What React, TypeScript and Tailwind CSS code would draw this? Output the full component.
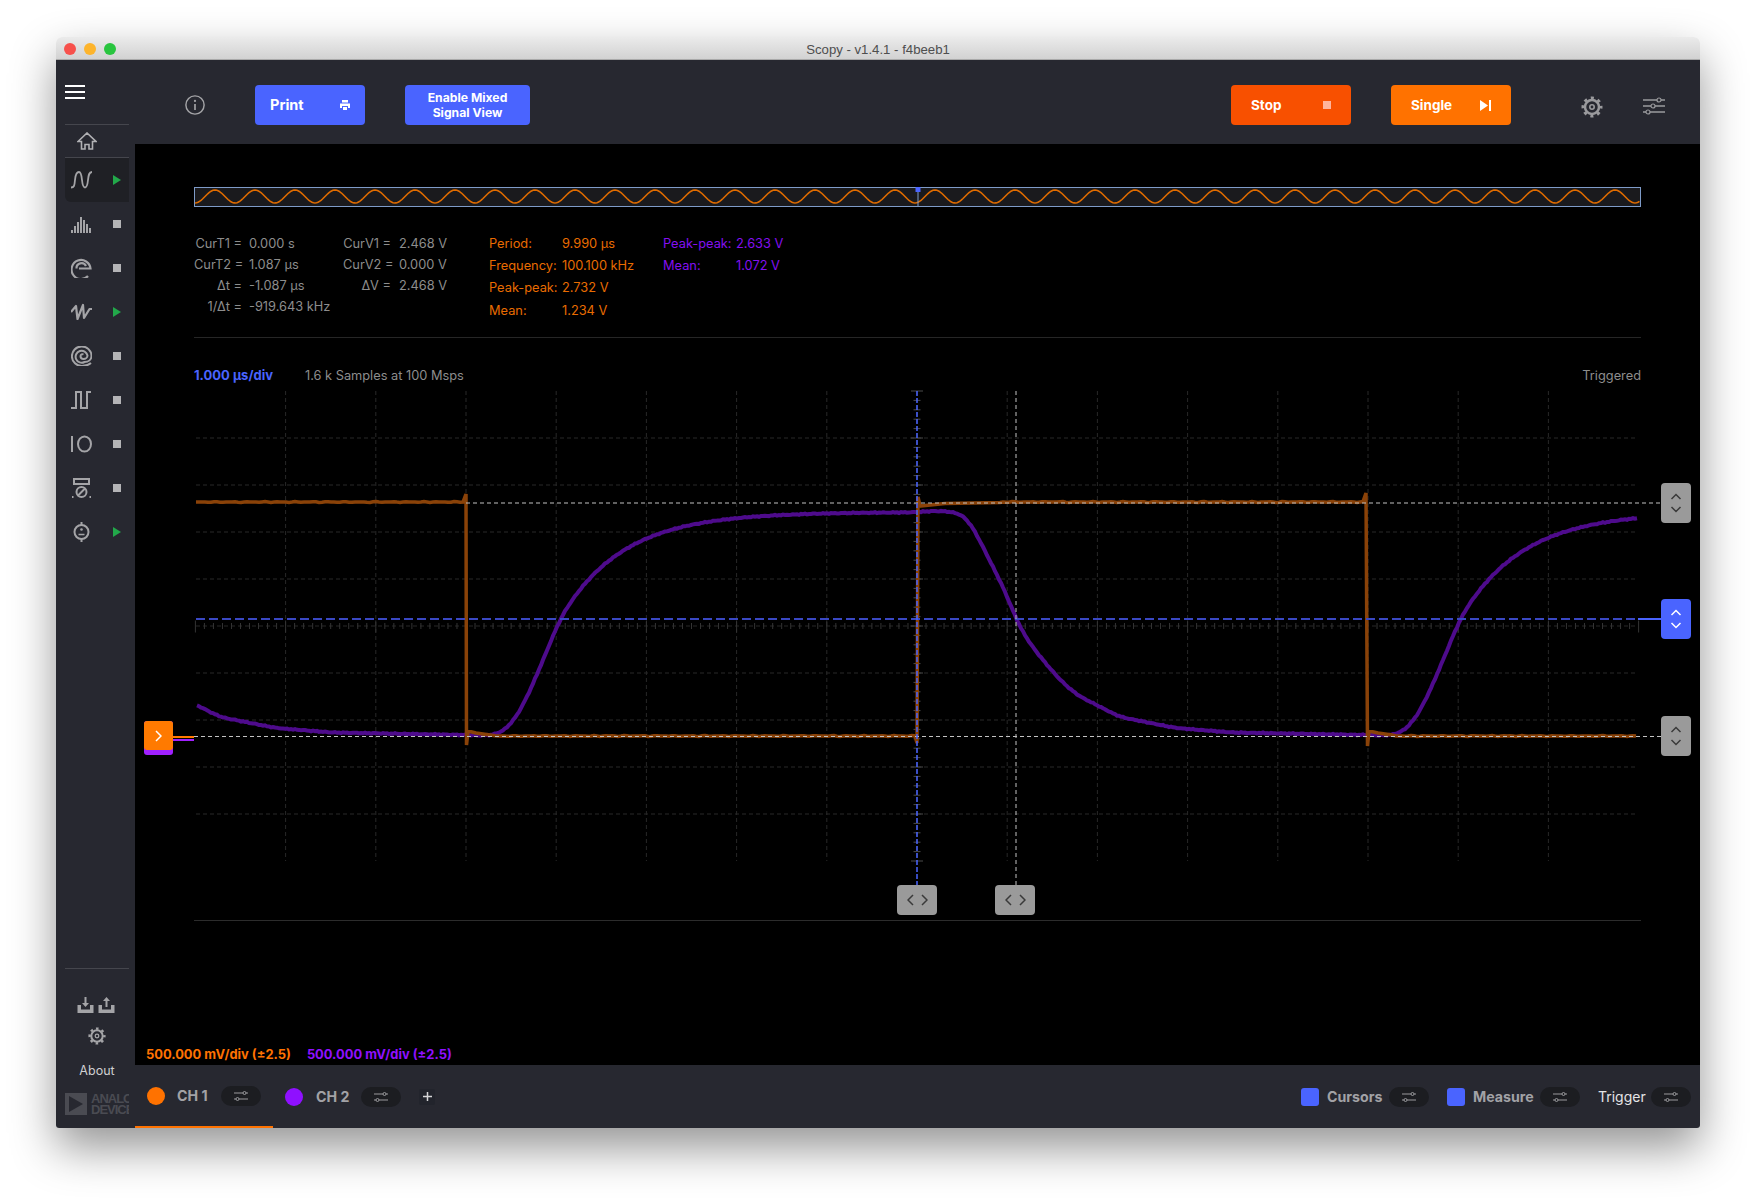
import type { ReactNode } from "react"

// trace helpers, all coordinates are page pixels (the plot svg viewBox matches them)
const lerpTable = (t: number[][], d: number) => {
  for (let i = 1; i < t.length; i++) {
    if (d <= t[i][0]) {
      const [x0, y0] = t[i - 1]
      const [x1, y1] = t[i]
      return y0 + ((y1 - y0) * (d - x0)) / (x1 - x0)
    }
  }
  return t[t.length - 1][1]
}

const fallTable = [
  [0, 512], [23, 510.7], [40, 512.7], [50, 518], [60, 535], [70, 555], [80, 575], [90, 595], [98, 617],
  [106, 633], [120, 653], [143, 680], [160, 695], [203, 717], [259, 728], [315, 732.5], [449, 735],
]
const riseHead = [
  [0, 735], [20, 735.5], [32, 734], [45, 725], [60, 700], [75, 665], [94, 619],
]

const noise = (x: number) => Math.sin(x * 1.7) * 0.3 + Math.sin(x * 0.63 + 1) * 0.25

// after the steep part the rise settles exponentially
const riseY = (d: number) => (d < 94 ? lerpTable(riseHead, d) : 512 + 107 * Math.exp(-(d - 94) / 62))

const purpleY = (x: number) => {
  if (x < 466) return lerpTable(fallTable, x - 17)
  if (x < 917) return riseY(x - 466)
  if (x < 1366) return lerpTable(fallTable, x - 917)
  return riseY(x - 1366)
}

const purplePath = () => {
  const pts: string[] = []
  for (let x = 197; x <= 1638; x += 2) {
    let sum = 0
    for (let k = -8; k <= 8; k += 2) sum += purpleY(x + k)
    pts.push(`${x},${(sum / 9 + noise(x)).toFixed(1)}`)
  }
  return "M" + pts.join(" L")
}

const orangePath = () => {
  const pts: string[] = []
  const flat = (a: number, b: number, y: number) => {
    for (let x = a; x < b; x += 3) pts.push(`${x},${(y + noise(x) * 0.8).toFixed(1)}`)
  }
  flat(196, 465, 502)
  pts.push("466,494", "466.5,745", "468,731", "476,733", "490,735")
  flat(495, 916, 736)
  pts.push("917,743", "918,497", "920,506", "945,503.5", "1000,502.5")
  flat(1003, 1365, 502)
  pts.push("1366,493", "1367.5,746", "1369,731", "1378,733", "1392,735")
  flat(1396, 1638, 736)
  return "M" + pts.join(" L")
}

const sinePath = () => {
  const pts: string[] = []
  for (let x = 195; x <= 1640; x += 1.5) {
    pts.push(`${x},${(196.5 - 6.5 * Math.sin((2 * Math.PI * (x - 205)) / 40)).toFixed(1)}`)
  }
  return "M" + pts.join(" L")
}

const gridX = Array.from({ length: 15 }, (_, i) => 285.6 + i * 90.2)
const gridY = Array.from({ length: 9 }, (_, i) => 438 + i * 47)
const ticksX = Array.from({ length: 161 }, (_, i) => 195.4 + i * 9.02)
const ticksY = Array.from({ length: 51 }, (_, i) => 391 + i * 9.4)

function Plot() {
  return (
    <svg viewBox="135 385 1565 535" className="block w-[1565px] h-[535px]">
      {gridX.map((x) => (
        <line key={x} x1={x} x2={x} y1={391} y2={861} stroke="#282828" strokeDasharray="4 3" />
      ))}
      {gridY.map((y) => (
        <line key={y} x1={196} x2={1638} y1={y} y2={y} stroke="#282828" strokeDasharray="4 3" />
      ))}
      {ticksX.map((x, i) => (
        <line key={x} x1={x} x2={x} y1={i % 10 === 0 ? 620.5 : 623} y2={i % 10 === 0 ? 632.5 : 629} stroke="#343434" />
      ))}
      {ticksY.map((y, i) => (
        <line key={y} x1={i % 5 === 0 ? 911 : 913.5} x2={i % 5 === 0 ? 923 : 920.5} y1={y} y2={y} stroke="#4a4a4a" />
      ))}
      <path d={purplePath()} fill="none" stroke="#4e0b8c" strokeWidth="4" />
      <path d={orangePath()} fill="none" stroke="#8a4208" strokeWidth="3.500" />
      <line x1={196} x2={1638} y1={619} y2={619} stroke="#3a48c4" strokeWidth="2" strokeDasharray="9 4" />
      <line x1={1638} x2={1661} y1={619} y2={619} stroke="#4a64ff" strokeWidth="2" />
      <line x1={466} x2={1661} y1={503} y2={503} stroke="#c2c2c2" strokeDasharray="4 3" />
      <line x1={194} x2={1661} y1={736.5} y2={736.5} stroke="#c2c2c2" strokeDasharray="4 3" />
      <line x1={917} x2={917} y1={391} y2={885} stroke="#4a64ff" strokeWidth="1.500" strokeDasharray="5 2" />
      <line x1={1016} x2={1016} y1={391} y2={885} stroke="#c2c2c2" strokeDasharray="4 3" />
    </svg>
  )
}

// sidebar icons
const S = { fill: "none", stroke: "#a4a4a7", strokeWidth: 1.6 }

const icons: Record<string, ReactNode> = {
  scope: <path {...S} strokeWidth="1.800" d="M0 17.500c3 0 3.500-1.500 4-7.500s1.500-8 4-8c2 0 2.500 3 3 8s1 7.500 3 7.500 2.500-2.500 3-7.500 1-8 4-8" />,
  spectrum: (
    <g fill="#a4a4a7">
      <rect x="0" y="16" width="2" height="3" />
      <rect x="3" y="12" width="2" height="7" />
      <rect x="6" y="8" width="2" height="11" />
      <rect x="9" y="3" width="2" height="16" />
      <rect x="12" y="6" width="2" height="13" />
      <rect x="15" y="10" width="2" height="9" />
      <rect x="18" y="14" width="2" height="5" />
    </g>
  ),
  network: (
    <g {...S} strokeWidth="2.200">
      <path d="M17 18A9.500 9.500 0 1 1 19.500 10.500H8" />
      <path d="M5.500 10.500A5 5 0 0 1 15 8" />
    </g>
  ),
  siggen: <path {...S} strokeWidth="2.200" strokeLinejoin="round" d="M0 10l5-6 1.500 13L12 3l1 13 5.500-9H21" />,
  spiral: (
    <g {...S} strokeWidth="2">
      <path d="M20 17c-3 2.500-6 3-9 3A9.800 9.800 0 1 1 20.500 10c0 3.500-3 6-7 6A6 6 0 1 1 16.500 9.500c0 2-2 3.500-4 3.500a3 3 0 0 1-3-3 2 2 0 0 1 3-1.500" />
    </g>
  ),
  pulse: <path {...S} strokeWidth="2" d="M0 18h5V2h5v16h6V2h4" />,
  io: (
    <g {...S} strokeWidth="2">
      <path d="M1 2v16" />
      <ellipse cx="13.500" cy="10" rx="6.500" ry="7.500" />
    </g>
  ),
  power: (
    <g {...S} strokeWidth="2">
      <rect x="3" y="1" width="15" height="5" />
      <circle cx="10.500" cy="14" r="5" />
      <path d="M7 17.500l7-7" />
      <path d="M1 19h1.500M18.500 19H20" />
    </g>
  ),
  dmm: (
    <g {...S} strokeWidth="2">
      <circle cx="10.500" cy="10" r="7" />
      <path d="M10.500 0v3M10.500 17v3" />
      <circle cx="10.500" cy="7.500" r="1.300" fill="#a4a4a7" stroke="none" />
      <path d="M7.500 12.500h6" strokeWidth="1.500" />
    </g>
  ),
}

const tools = [
  { id: "scope", on: true },
  { id: "spectrum", on: false },
  { id: "network", on: false },
  { id: "siggen", on: true },
  { id: "spiral", on: false },
  { id: "pulse", on: false },
  { id: "io", on: false },
  { id: "power", on: false },
  { id: "dmm", on: true },
]

function Gear({ size = 22, color = "#9a9a9d" }: { size?: number; color?: string }) {
  return (
    <svg width={size} height={size} viewBox="0 0 22 22" fill="none" stroke={color}>
      <circle cx="11" cy="11" r="7" strokeWidth="2.500" />
      <circle cx="11" cy="11" r="9" strokeWidth="3" strokeDasharray="3.070 4" strokeDashoffset="1.500" />
      <circle cx="11" cy="11" r="2.200" strokeWidth="1.600" />
    </svg>
  )
}

function Sliders({ w, color = "#9a9a9d" }: { w: number; color?: string }) {
  return (
    <svg width={w} height={w * 0.82} viewBox="0 0 22 18" fill="none" stroke={color} strokeWidth="1.500">
      <path d="M0 3h14M18 3h4M0 9h8M12 9h10M0 15h3M7 15h15" />
      <circle cx="16" cy="3" r="2" strokeWidth="1.200" />
      <circle cx="10" cy="9" r="2" strokeWidth="1.200" />
      <circle cx="5" cy="15" r="2" strokeWidth="1.200" />
    </svg>
  )
}

function Pill() {
  return (
    <div className="w-[40px] h-[20px] rounded-full bg-[#1c1d21] flex items-center justify-center">
      <svg width="14" height="12" viewBox="0 0 14 12" fill="none" stroke="#9a9a9d">
        <path d="M0 3h9M12 3h2M0 9h2M5 9h9" />
        <circle cx="10.500" cy="3" r="1.500" />
        <circle cx="3.500" cy="9" r="1.500" />
      </svg>
    </div>
  )
}

function Chevrons({ dir, color = "#3a3a3a" }: { dir: "v" | "h"; color?: string }) {
  return dir === "v" ? (
    <svg width="12" height="20" viewBox="0 0 12 20" fill="none" stroke={color} strokeWidth="1.500">
      <path d="M1.500 6L6 1.500 10.500 6M1.500 14L6 18.500 10.500 14" />
    </svg>
  ) : (
    <svg width="21" height="12" viewBox="0 0 21 12" fill="none" stroke={color} strokeWidth="1.500">
      <path d="M6 1L1 6l5 5M15 1l5 5-5 5" />
    </svg>
  )
}

const Row = ({ a, b }: { a: string; b: string }) => (
  <>
    <div className="text-right whitespace-nowrap">{a}</div>
    <div className="whitespace-nowrap">{b}</div>
  </>
)

const MRow = ({ a, b }: { a: string; b: string }) => (
  <>
    <div className="whitespace-nowrap">{a}</div>
    <div className="whitespace-nowrap">{b}</div>
  </>
)

export default function App() {
  return (
    <div className="w-[1756px] h-[1202px] bg-white overflow-hidden pt-[37px] pl-[56px] font-[Inter,sans-serif]">
      <div className="w-[1644px] h-[1091px] flex flex-col rounded-t-[6px] rounded-b-[3px] shadow-[0_20px_45px_rgba(0,0,0,0.42)]">
        {/* title bar */}
        <div className="relative h-[23px] shrink-0 rounded-t-[6px] bg-gradient-to-b from-[#ebebeb] to-[#d2d2d2] border-b border-[#a9a9a9] flex items-center justify-center">
          <div className="absolute left-[8px] top-[6px] flex gap-[8px]">
            <div className="w-[12px] h-[12px] rounded-full bg-[#f7514c]" />
            <div className="w-[12px] h-[12px] rounded-full bg-[#fdb42c]" />
            <div className="w-[12px] h-[12px] rounded-full bg-[#29c53f]" />
          </div>
          <span className="pt-[3px] text-[13.200px] text-[#4e4e4e] font-['Liberation_Sans',sans-serif]">Scopy - v1.4.1 - f4beeb1</span>
        </div>

        <div className="flex flex-1 min-h-0">
          {/* sidebar */}
          <div className="w-[79px] shrink-0 bg-[#272830] flex flex-col pl-[9px] rounded-bl-[3px]">
            <div className="mt-[25px] w-[20px] h-[14px] flex flex-col justify-between">
              <div className="h-[2px] bg-white" />
              <div className="h-[2px] bg-white" />
              <div className="h-[2px] bg-white" />
            </div>
            <div className="mt-[25px] w-[64px] h-[1px] bg-[#45464d]" />
            <div className="w-[64px] h-[32px] flex items-center pl-[12px]">
              <svg width="20" height="18" viewBox="0 0 20 18" fill="none" stroke="#b0b0b3" strokeWidth="1.600">
                <path d="M1 9.500L10 1l9 8.500h-3.500V17H12v-4.500H8V17H4.500V9.500z" />
              </svg>
            </div>
            <div className="w-[64px] h-[1px] bg-[#45464d]" />
            {tools.map((t) => (
              <div
                key={t.id}
                className={
                  t.id === "scope"
                    ? "w-[64px] h-[44px] flex items-center pl-[6px] rounded-bl-[6px] bg-[#1f2025]"
                    : "w-[64px] h-[44px] flex items-center pl-[6px]"
                }
              >
                <svg width="21" height="20" viewBox="0 0 21 20" className="shrink-0">
                  {icons[t.id]}
                </svg>
                {t.on ? (
                  <div className="ml-[21px] w-0 h-0 border-y-[5.500px] border-y-transparent border-l-[8px] border-l-[#22a84a]" />
                ) : (
                  <div className="ml-[21px] w-[8px] h-[8px] bg-[#b4b4b6]" />
                )}
              </div>
            ))}

            <div className="mt-auto w-[64px] h-[1px] bg-[#45464d]" />
            <div className="mt-[28px] flex gap-[4px] pl-[12px]">
              <svg width="17" height="16" viewBox="0 0 16 16" fill="#a4a4a7">
                <path d="M0 8h3.500v4.500h9V8H16v8H0zM7 0h2v6h2.500L8 10 4.500 6H7z" />
              </svg>
              <svg width="17" height="16" viewBox="0 0 16 16" fill="#a4a4a7">
                <path d="M0 8h3.500v4.500h9V8H16v8H0zM7 10h2V4h2.500L8 0 4.500 4H7z" />
              </svg>
            </div>
            <div className="mt-[14px] pl-[23px]">
              <Gear size={18} color="#a4a4a7" />
            </div>
            <div className="mt-[18px] w-[64px] text-center text-[12.500px] leading-[16px] text-[#cfcfd1]">About</div>
            <div className="mt-[14px] mb-[13px] w-[64px] h-[22px] overflow-hidden flex gap-[4px]">
              <div className="w-[22px] h-[22px] shrink-0 bg-[#4a4b52] flex items-center justify-center">
                <div className="w-0 h-0 border-y-[8px] border-y-transparent border-l-[14px] border-l-[#272830]" />
              </div>
              <div className="text-[13px] tracking-[-1px] font-bold text-[#4a4b52] whitespace-nowrap font-['Liberation_Sans',sans-serif]">
                <div className="h-[11px] leading-[11px]">ANALOG</div>
                <div className="h-[11px] leading-[11px]">DEVICES</div>
              </div>
            </div>
          </div>

          {/* main */}
          <div className="flex-1 min-w-0 flex flex-col">
            <div className="h-[84px] shrink-0 bg-[#272830] flex items-center pt-[6px] pl-[50px] pr-[35px]">
              <svg width="20" height="20" viewBox="0 0 18 18" fill="none" stroke="#a4a4a7" strokeWidth="1.300">
                <circle cx="9" cy="9" r="8.200" />
                <path d="M9 8v5.500" strokeWidth="1.500" />
                <circle cx="9" cy="5.300" r="1" fill="#a4a4a7" stroke="none" />
              </svg>
              <div className="ml-[50px] w-[110px] h-[40px] rounded-[4px] bg-[#4a64ff] text-white text-[14.500px] font-bold flex items-center justify-between pl-[15px] pr-[15px]">
                Print
                <svg width="10" height="10" viewBox="0 0 10 10" fill="white">
                  <path d="M2 0h6v2.500H2zM0 3.500h10V8H8V6H2v2H0zM3 7h4v3H3z" />
                </svg>
              </div>
              <div className="ml-[40px] w-[125px] h-[40px] rounded-[4px] bg-[#4a64ff] text-white text-[12.200px] leading-[15px] font-bold flex items-center justify-center text-center">
                Enable Mixed
                <br />
                Signal View
              </div>
              <div className="ml-auto w-[120px] h-[40px] rounded-[4px] bg-[#f85000] text-white text-[13.500px] font-bold flex items-center justify-between pl-[20px] pr-[20px]">
                Stop
                <div className="w-[8px] h-[8px] bg-[#ffb59c]" />
              </div>
              <div className="ml-[40px] w-[120px] h-[40px] rounded-[4px] bg-[#ff7200] text-white text-[13.500px] font-bold flex items-center justify-between pl-[20px] pr-[20px]">
                Single
                <svg width="11" height="11" viewBox="0 0 11 11" fill="white">
                  <path d="M0 0l8 5.500L0 11zM9 0h2v11H9z" />
                </svg>
              </div>
              <div className="ml-[70px] mt-[3px]">
                <Gear />
              </div>
              <div className="ml-[40px] mt-[3px]">
                <Sliders w={22} />
              </div>
            </div>

            <div className="flex-1 min-h-0 bg-black px-[59px] pt-[43px] flex flex-col">
              {/* overview strip */}
              <div className="relative h-[20px] border border-[#7e9bc8] bg-[#1a1a1d] shrink-0">
                <svg viewBox="194 187 1447 20" className="absolute -left-px -top-px w-[1447px] h-[20px]">
                  <path d={sinePath()} fill="none" stroke="#e06c00" strokeWidth="1.600" />
                  <line x1={918} x2={918} y1={187} y2={207} stroke="#7e9bc8" />
                  <rect x={915.500} y={187} width={5} height={5} fill="#4a64ff" />
                </svg>
              </div>

              {/* measurements */}
              <div className="mt-[26px] h-[104px] flex text-[12.800px] shrink-0">
                <div className="w-[149px] grid grid-cols-[48px_1fr] gap-x-[7px] auto-rows-[21px] items-center text-[#8d8d8d] content-start">
                  <Row a="CurT1 =" b="0.000 s" />
                  <Row a="CurT2 =" b="1.087 µs" />
                  <Row a="Δt =" b="-1.087 µs" />
                  <Row a="1/Δt =" b="-919.643 kHz" />
                </div>
                <div className="w-[146px] grid grid-cols-[48px_1fr] gap-x-[8px] auto-rows-[21px] items-center text-[#8d8d8d] content-start">
                  <Row a="CurV1 =" b="2.468 V" />
                  <Row a="CurV2 =" b="0.000 V" />
                  <Row a="ΔV =" b="2.468 V" />
                </div>
                <div className="w-[174px] -mt-[1px] grid grid-cols-[73px_1fr] auto-rows-[22.400px] items-center text-[#e96c00] content-start">
                  <MRow a="Period:" b="9.990 µs" />
                  <MRow a="Frequency:" b="100.100 kHz" />
                  <MRow a="Peak-peak:" b="2.732 V" />
                  <MRow a="Mean:" b="1.234 V" />
                </div>
                <div className="w-[174px] -mt-[1px] grid grid-cols-[73px_1fr] auto-rows-[22.400px] items-center text-[#8410f0] content-start">
                  <MRow a="Peak-peak:" b="2.633 V" />
                  <MRow a="Mean:" b="1.072 V" />
                </div>
              </div>

              <div className="h-[1px] bg-[#262626] shrink-0" />

              <div className="mt-[28px] h-[19px] flex items-center text-[12.800px] shrink-0">
                <span className="font-bold text-[13px] text-[#4a64ff]">1.000 µs/div</span>
                <span className="ml-[32px] text-[#8d8d8d]">1.6 k Samples at 100 Msps</span>
                <span className="ml-auto text-[#8d8d8d]">Triggered</span>
              </div>

              <div className="-mx-[59px] relative h-[535px] shrink-0">
                <Plot />
                {/* offset handle */}
                <div className="absolute left-[9px] top-[336px] w-[29px] h-[34px] rounded-[3px] bg-[#a020ff]">
                  <div className="h-[29px] rounded-[3px] bg-[#ff7a00] flex items-center justify-center">
                    <svg width="7" height="12" viewBox="0 0 7 12" fill="none" stroke="white" strokeWidth="1.500">
                      <path d="M1 1l5 5-5 5" />
                    </svg>
                  </div>
                </div>
                <div className="absolute left-[38px] top-[350.500px] w-[21px] h-[2px] bg-[#ff7a00]" />
                <div className="absolute left-[38px] top-[354px] w-[21px] h-[2px] bg-[#a020ff]" />
                {/* cursor handles */}
                <div className="absolute left-[1526px] top-[98px] w-[30px] h-[40px] rounded-[4px] bg-[#9a9a9a] flex items-center justify-center">
                  <Chevrons dir="v" />
                </div>
                <div className="absolute left-[1526px] top-[214px] w-[30px] h-[40px] rounded-[4px] bg-[#4a64ff] flex items-center justify-center">
                  <Chevrons dir="v" color="white" />
                </div>
                <div className="absolute left-[1526px] top-[331px] w-[30px] h-[40px] rounded-[4px] bg-[#9a9a9a] flex items-center justify-center">
                  <Chevrons dir="v" />
                </div>
                <div className="absolute left-[762px] top-[500px] w-[40px] h-[30px] rounded-[4px] bg-[#9a9a9a] flex items-center justify-center">
                  <Chevrons dir="h" />
                </div>
                <div className="absolute left-[860px] top-[500px] w-[40px] h-[30px] rounded-[4px] bg-[#9a9a9a] flex items-center justify-center">
                  <Chevrons dir="h" />
                </div>
              </div>

              <div className="h-[1px] bg-[#2c2c2c] shrink-0" />

              <div className="mt-auto -ml-[48px] pb-[2px] flex text-[12.900px] font-bold leading-[16px]">
                <span className="text-[#ff7200]">500.000 mV/div (±2.5)</span>
                <span className="ml-[16px] text-[#8f10ff]">500.000 mV/div (±2.5)</span>
              </div>
            </div>

            {/* channel bar */}
            <div className="h-[63px] shrink-0 bg-[#272830] flex items-center text-[14.200px] font-bold text-[#a2a2a6] rounded-br-[3px]">
              <div className="w-[138px] h-full border-b-[2px] border-[#ff7200] flex items-center pl-[12px]">
                <div className="w-[18px] h-[18px] rounded-full bg-[#ff7200]" />
                <span className="ml-[12px] w-[44px]">CH 1</span>
                <Pill />
              </div>
              <div className="ml-[12px] w-[18px] h-[18px] rounded-full bg-[#8f10ff]" />
              <span className="ml-[13px] w-[45px]">CH 2</span>
              <Pill />
              <div className="ml-[18px] w-[16px] h-[16px] rounded-[2px] bg-[#22242c] flex items-center justify-center">
                <svg width="9" height="9" viewBox="0 0 9 9" stroke="#d6d6d8" strokeWidth="1.500">
                  <path d="M4.500 0v9M0 4.500h9" />
                </svg>
              </div>

              <div className="ml-auto w-[18px] h-[18px] rounded-[3px] bg-[#4a64ff]" />
              <span className="ml-[8px] w-[62px]">Cursors</span>
              <Pill />
              <div className="ml-[18px] w-[18px] h-[18px] rounded-[3px] bg-[#4a64ff]" />
              <span className="ml-[8px] w-[67px]">Measure</span>
              <Pill />
              <span className="ml-[18px] w-[53px] font-normal text-[14px] text-[#e4e4e6]">Trigger</span>
              <Pill />
              <div className="w-[9px]" />
            </div>
          </div>
        </div>
      </div>
    </div>
  )
}
